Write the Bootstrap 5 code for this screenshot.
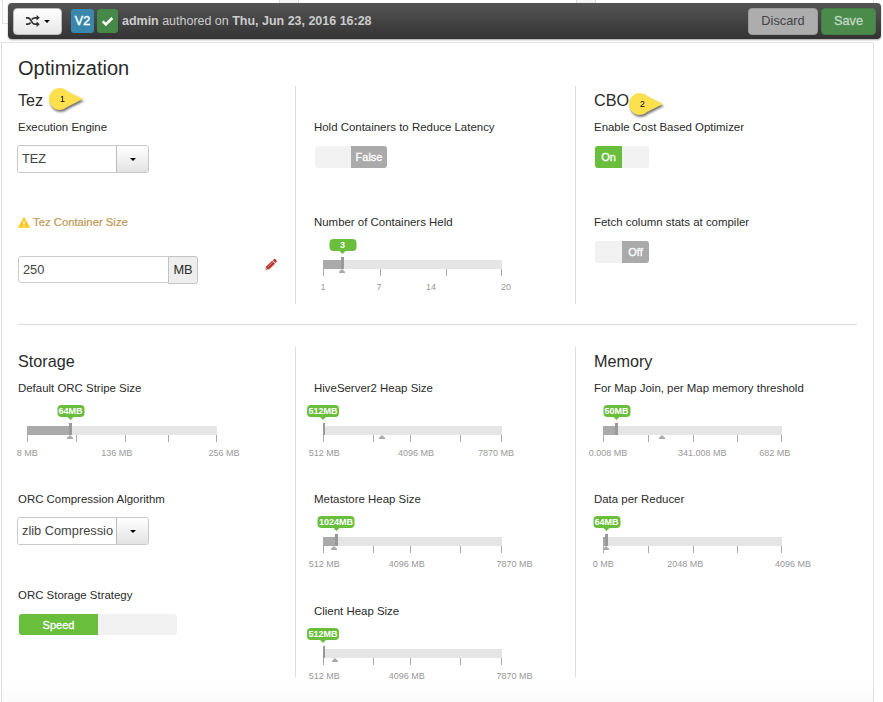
<!DOCTYPE html>
<html lang="en">
<head>
<meta charset="utf-8">
<title>Hive Configuration</title>
<meta name="viewport" content="width=device-width, initial-scale=1">
<link href="https://cdn.jsdelivr.net/npm/bootstrap@5.3.0/dist/css/bootstrap.min.css" rel="stylesheet">
<style>
  body { font-family: "Liberation Sans", Arial, sans-serif; font-size: 11.45px; line-height: 20px; color: #2b2b2b; height: 702px; overflow: hidden; background: #fff; }
  svg { display: block; }

  /* bottoms of the panels scrolled under the version bar */
  .under-cols { height: 3px; padding-left: 2px; width: 874px; background: #fafafa; }
  .under-cols > div { border-left: 1px solid #ddd; background: #fff; }
  .under-cols > .gutter { width: 19px; background: #f5f5f5; }
  .under-cols > .u1 { width: 277px; }
  .under-cols > .u2 { width: 278px; }
  .under-cols > .u3 { width: 279px; }
  .under-edge { left: 2px; top: 0; width: 7px; height: 24px; border-left: 1px solid #e2e2e2; border-bottom: 1px solid #e2e2e2; }

  .version-bar { margin-left: 8px; width: 873px; height: 36px; padding: 0 5px; border-radius: 4px; background: linear-gradient(#555, #333); box-shadow: 0 1px 2px rgba(0,0,0,.35); position: relative; color: #ccc; font-size: 12.47px; }
  .bar-btn { height: 27px; padding: 0; border: 1px solid #bbb; border-radius: 4px; font-size: 12.8px; line-height: 24px; color: #333; }
  .btn-compare { width: 49px; background: linear-gradient(#fff, #e6e6e6) !important; }
  .btn-discard { width: 70px; margin-right: 3px; background: #adadad !important; border-color: #9a9a9a !important; color: #444 !important; }
  .btn-keep { width: 55px; background: #4a8a4b !important; border-color: #437e43 !important; color: #c5d8c5 !important; -webkit-text-stroke: .3px #c5d8c5; }
  .ver-tag, .ok-tag { height: 24px; border-radius: 3px; color: #fff; }
  .ver-tag { width: 23px; margin-left: 9px; background: #3a87ad; -webkit-text-stroke: .4px #fff; }
  .ok-tag { width: 21px; margin-left: 3px; background: #468847; }

  .config-panel { margin: 3px 0 0 1px; width: 873px; height: 660px; overflow: hidden; border: 1px solid #e2e2e2; border-bottom: 0; border-left-color: #ddd; padding: 15px 16px 0; background: linear-gradient(#fff 0, #fff 637px, #fafafa 660px); }
  .config-panel h2 { font-size: 20px; line-height: 20px; margin: 0 0 8px; }
  .config-panel h3 { font-size: 16.2px; line-height: 29px; height: 31px; margin: 0; }
  .cfg-col { border-right: 1px solid #ddd; }
  .cfg-col:last-child { border-right: 0; }
  .cfg-col.c1 { width: 278px; }
  .cfg-col.c2 { width: 280px; padding-left: 18px; }
  .cfg-col.c3 { width: 281px; padding-left: 18px; }
  .row-top { height: 218px; }
  .row-bottom { height: 330px; }
  .no-title { padding-top: 31px; }
  .divider { height: 1px; background: #ddd; margin: 20px 0 22px; }
  .w95 { height: 95px; } .w96 { height: 96px; } .w111 { height: 111px; } .w112 { height: 112px; }
  .warn { color: #c09853; gap: 3px; -webkit-text-stroke: .2px #c09853; font-size: 11.3px; }

  .combo { margin: 8px 0 0 -1px; width: 132px; height: 28px; border: 1px solid #c8c8c8; border-radius: 3px; overflow: hidden; background: #fff; }
  .combo input { width: 98px; border: 0; padding: 0 0 0 4px; font-size: 12.8px; color: #444; outline: 0; }
  .combo button { width: 33px; border: 0; border-left: 1px solid #bbb; background: linear-gradient(#fff, #e3e3e3); padding: 0; }
  .caret { width: 0; height: 0; border: 3px solid transparent; border-top-color: #000; border-bottom: 0; display: inline-block; vertical-align: middle; }
  .size-field input { width: 151px; height: 27px; border: 1px solid #ccc; border-radius: 3px 0 0 3px; padding: 0 4px; font-size: 12.8px; color: #444; }
  .size-field span { width: 30px; height: 28px; margin-left: -1px; border: 1px solid #c4c4c4; border-radius: 0 3px 3px 0; background: #eee; font-size: 12.8px; line-height: 26px; }
  .pencil { margin-right: 17px; margin-top: 2px; }

  .toggle { margin-left: 1px; margin-top: 9px; height: 22px; border-radius: 3px; background: #f2f2f2; overflow: hidden; color: #fff; line-height: 22px; font-size: 11px; -webkit-text-stroke: .3px #fff; text-align: center; }
  .toggle > div { width: 50%; }
  .t-short { width: 54px; }
  .t-mid { width: 72px; }
  .t-long { width: 158px; height: 21px; }
  .on { background: #69be3c; }
  .off { background: #aaa; }

  .slider { margin-left: 9px; height: 70px; position: relative; }
  .slider > * { position: absolute; }
  .track { left: 0; top: 28px; height: 9px; background: #e5e5e5; }
  .fill { left: 0; top: 28px; height: 9px; background: #aaa; }
  .grip { top: 25px; width: 3px; height: 12px; background: #999; margin-left: -3px; }
  .tick { top: 37px; width: 1px; height: 7px; background: #aaa; }
  .rec { top: 37px; width: 6px; height: 4px; margin-left: -3px; background: #aaa; clip-path: polygon(50% 0, 100% 70%, 100% 100%, 0 100%, 0 70%); }
  .tip { top: 7px; height: 12px; min-width: 27px; padding: 0 1.5px; border-radius: 4px; background: #69be3c; color: #fff; font: bold 9px/12px "Liberation Sans", sans-serif; text-align: center; transform: translateX(-50%); white-space: nowrap; }
  .tip::after { content: ""; position: absolute; left: 50%; top: 100%; margin-left: -3px; border: 3px solid transparent; border-top-color: #69be3c; border-bottom: 0; }
  .num { top: 45px; font-size: 9px; color: #999; transform: translateX(-50%); white-space: nowrap; }

  .callout-pin { position: absolute; filter: drop-shadow(1px 2px 1px rgba(0,0,0,.55)); font-size: 9px; color: #000; }
  .pin-1 { left: 48px; top: 87px; } .pin-2 { left: 628px; top: 92px; }
</style>
<script src="https://cdn.jsdelivr.net/npm/bootstrap@5.3.0/dist/js/bootstrap.bundle.min.js"></script>
</head>
<body>
<div class="under-cols d-flex">
  <div class="u1"></div><div class="gutter"></div><div class="u2"></div><div class="gutter"></div><div class="u3 border-end"></div>
</div>
<div class="under-edge position-absolute"></div>

<div class="version-bar d-flex align-items-center">
  <button class="btn bar-btn btn-compare d-flex align-items-center justify-content-center gap-1" aria-label="Compare">
    <svg width="14" height="12" viewBox="0 0 14 12" fill="none" stroke="#333" stroke-width="1.7"><path d="M0 2.8h2c1.5 0 2.300 1 3.300 3.200S7.500 9.200 9 9.200h2.200M0 9.200h2c1.200 0 1.900-.6 2.600-1.700M6 4.500c.8-1.100 1.600-1.700 3-1.700h2.200"/><path d="M10.600 0v5.600L13.800 2.800zM10.600 6.400V12l3.200-2.800z" fill="#333" stroke="none"/></svg>
    <span class="caret"></span>
  </button>
  <span class="ver-tag d-flex align-items-center justify-content-center">V2</span>
  <span class="ok-tag d-flex align-items-center justify-content-center"><svg width="13" height="11" viewBox="0 0 13 11" fill="none" stroke="#fff" stroke-width="2.6"><path d="M1.700 5.400 4.900 8.500 11.300 2"/></svg></span>
  <span class="authored ms-1"><b>admin</b> authored on <b>Thu, Jun 23, 2016 16:28</b></span>
  <button class="btn bar-btn btn-discard ms-auto">Discard</button>
  <button class="btn bar-btn btn-keep">Save</button>
</div>

<main class="config-panel">
  <h2>Optimization</h2>
  <div class="row-top d-flex">
    <section class="cfg-col c1">
      <h3>Tez</h3>
      <div class="w95">Execution Engine
        <div class="combo d-flex"><input value="TEZ" aria-label="Execution Engine"><button aria-label="Open"><span class="caret"></span></button></div>
      </div>
      <div class="w95">
        <div class="warn d-flex align-items-center">
          <svg width="12" height="11" viewBox="0 0 12 11"><path d="M6 .3 11.700 10.600H.3z" fill="#ffc91f" stroke="#ffc91f" stroke-width=".6" stroke-linejoin="round"/><path d="M6 3.700v3.200M6 7.900v1.300" stroke="#fff" stroke-width="1.300"/></svg>Tez Container Size</div>
        <div class="d-flex align-items-start pt-4">
          <div class="size-field d-flex align-items-start"><input value="250" aria-label="Tez Container Size"><span class="text-center">MB</span></div>
          <svg class="pencil ms-auto" width="14" height="13" viewBox="0 0 14 13"><path d="M1.500 12 2.300 8.300 8.200 2.800 11 5.700 5.100 11.200z" fill="#bd362f"/><path d="M8.800 2.200 10 1.100q.8-.6 1.500.1l1.100 1.200q.6.800-.1 1.500L11.500 5z" fill="#bd362f"/><path d="M4.200 8.500 8.600 4.400" stroke="#e9a19c" stroke-width=".7"/><path d="M2.200 10 3.500 11.300" stroke="#fff" stroke-width=".8"/></svg>
        </div>
      </div>
    </section>
    <section class="cfg-col c2 no-title">
      <div class="w95">Hold Containers to Reduce Latency
        <div class="toggle t-mid d-flex justify-content-end"><div class="off">False</div></div>
      </div>
      <div>Number of Containers Held
        <div class="slider" data-width="179" data-tip="3" data-tip-at="19.500" data-fill="21" data-rec="19" data-ticks="0,57,123,178" data-nums="1@0,7@56,14@108,20@183"></div>
      </div>
    </section>
    <section class="cfg-col c3">
      <h3>CBO</h3>
      <div class="w95">Enable Cost Based Optimizer
        <div class="toggle t-short"><div class="on">On</div></div>
      </div>
      <div>Fetch column stats at compiler
        <div class="toggle t-short d-flex justify-content-end"><div class="off">Off</div></div>
      </div>
    </section>
  </div>
  <div class="divider"></div>
  <div class="row-bottom d-flex">
    <section class="cfg-col c1">
      <h3>Storage</h3>
      <div class="w111">Default ORC Stripe Size
        <div class="slider" data-width="190" data-tip="64MB" data-tip-at="43.5" data-fill="45" data-rec="43" data-ticks="0,49,98,141,189" data-nums="8 MB@0.300,136 MB@89.700,256 MB@197"></div>
      </div>
      <div class="w96">ORC Compression Algorithm
        <div class="combo d-flex"><input value="zlib Compressio" aria-label="ORC Compression Algorithm"><button aria-label="Open"><span class="caret"></span></button></div>
      </div>
      <div>ORC Storage Strategy
        <div class="toggle t-long"><div class="on">Speed</div></div>
      </div>
    </section>
    <section class="cfg-col c2 no-title">
      <div class="w111">HiveServer2 Heap Size
        <div class="slider" data-width="179" data-tip="512MB" data-tip-at="0" data-fill="2" data-rec="59" data-ticks="0,50,87,137,178" data-nums="512 MB@1.300,4096 MB@93,7870 MB@173"></div>
      </div>
      <div class="w112">Metastore Heap Size
        <div class="slider" data-width="179" data-tip="1024MB" data-tip-at="13" data-fill="15" data-rec="11" data-ticks="0,50,87,137,178" data-nums="512 MB@1.300,4096 MB@83.800,7870 MB@191.500"></div>
      </div>
      <div>Client Heap Size
        <div class="slider" data-width="179" data-tip="512MB" data-tip-at="0" data-fill="2" data-rec="12" data-ticks="0,50,87,137,178" data-nums="512 MB@1.300,4096 MB@83.800,7870 MB@191.500"></div>
      </div>
    </section>
    <section class="cfg-col c3">
      <h3>Memory</h3>
      <div class="w111">For Map Join, per Map memory threshold
        <div class="slider" data-width="179" data-tip="50MB" data-tip-at="13.500" data-fill="15" data-rec="59" data-ticks="0,45,90,134,178" data-nums="0.008 MB@5,341.008 MB@99.300,682 MB@171.700"></div>
      </div>
      <div>Data per Reducer
        <div class="slider" data-width="179" data-tip="64MB" data-tip-at="3.500" data-fill="5" data-rec="3" data-ticks="0,45,90,134,178" data-nums="0 MB@0.300,2048 MB@82.300,4096 MB@190"></div>
      </div>
    </section>
  </div>
</main>

<div class="callout-pin pin-1"><svg width="36" height="24" viewBox="0 0 36 24"><path d="M35 12 19.500 4.200Q16 1 12 1a11 11 0 0 0 0 22q4 0 7.500-3.200z" fill="#fde04d"/><text x="12" y="15">1</text></svg></div>
<div class="callout-pin pin-2"><svg width="36" height="24" viewBox="0 0 36 24"><path d="M35 12 19.500 4.200Q16 1 12 1a11 11 0 0 0 0 22q4 0 7.500-3.200z" fill="#fde04d"/><text x="12" y="15">2</text></svg></div>

<script>
  // Builds each slider's track, ticks, grip, value tip and scale numbers from its data attributes
  document.querySelectorAll('.slider').forEach(function (s) {
    var d = s.dataset;
    function add(cls, left, text) {
      var e = document.createElement('div');
      e.className = cls;
      e.style.left = left + 'px';
      if (text) e.textContent = text;
      s.appendChild(e);
      return e;
    }
    add('track', 0).style.width = d.width + 'px';
    add('fill', 0).style.width = d.fill + 'px';
    d.ticks.split(',').forEach(function (t) { add('tick', t); });
    add('rec', d.rec);
    var grip = add('grip', Math.max(+d.fill, 3));
    if (+d.fill < 3) { grip.style.width = '2px'; }
    add('tip', d.tipAt, d.tip);
    d.nums.split(',').forEach(function (n) { var p = n.split('@'); add('num', p[1], p[0]); });
  });
</script>
</body>
</html>
